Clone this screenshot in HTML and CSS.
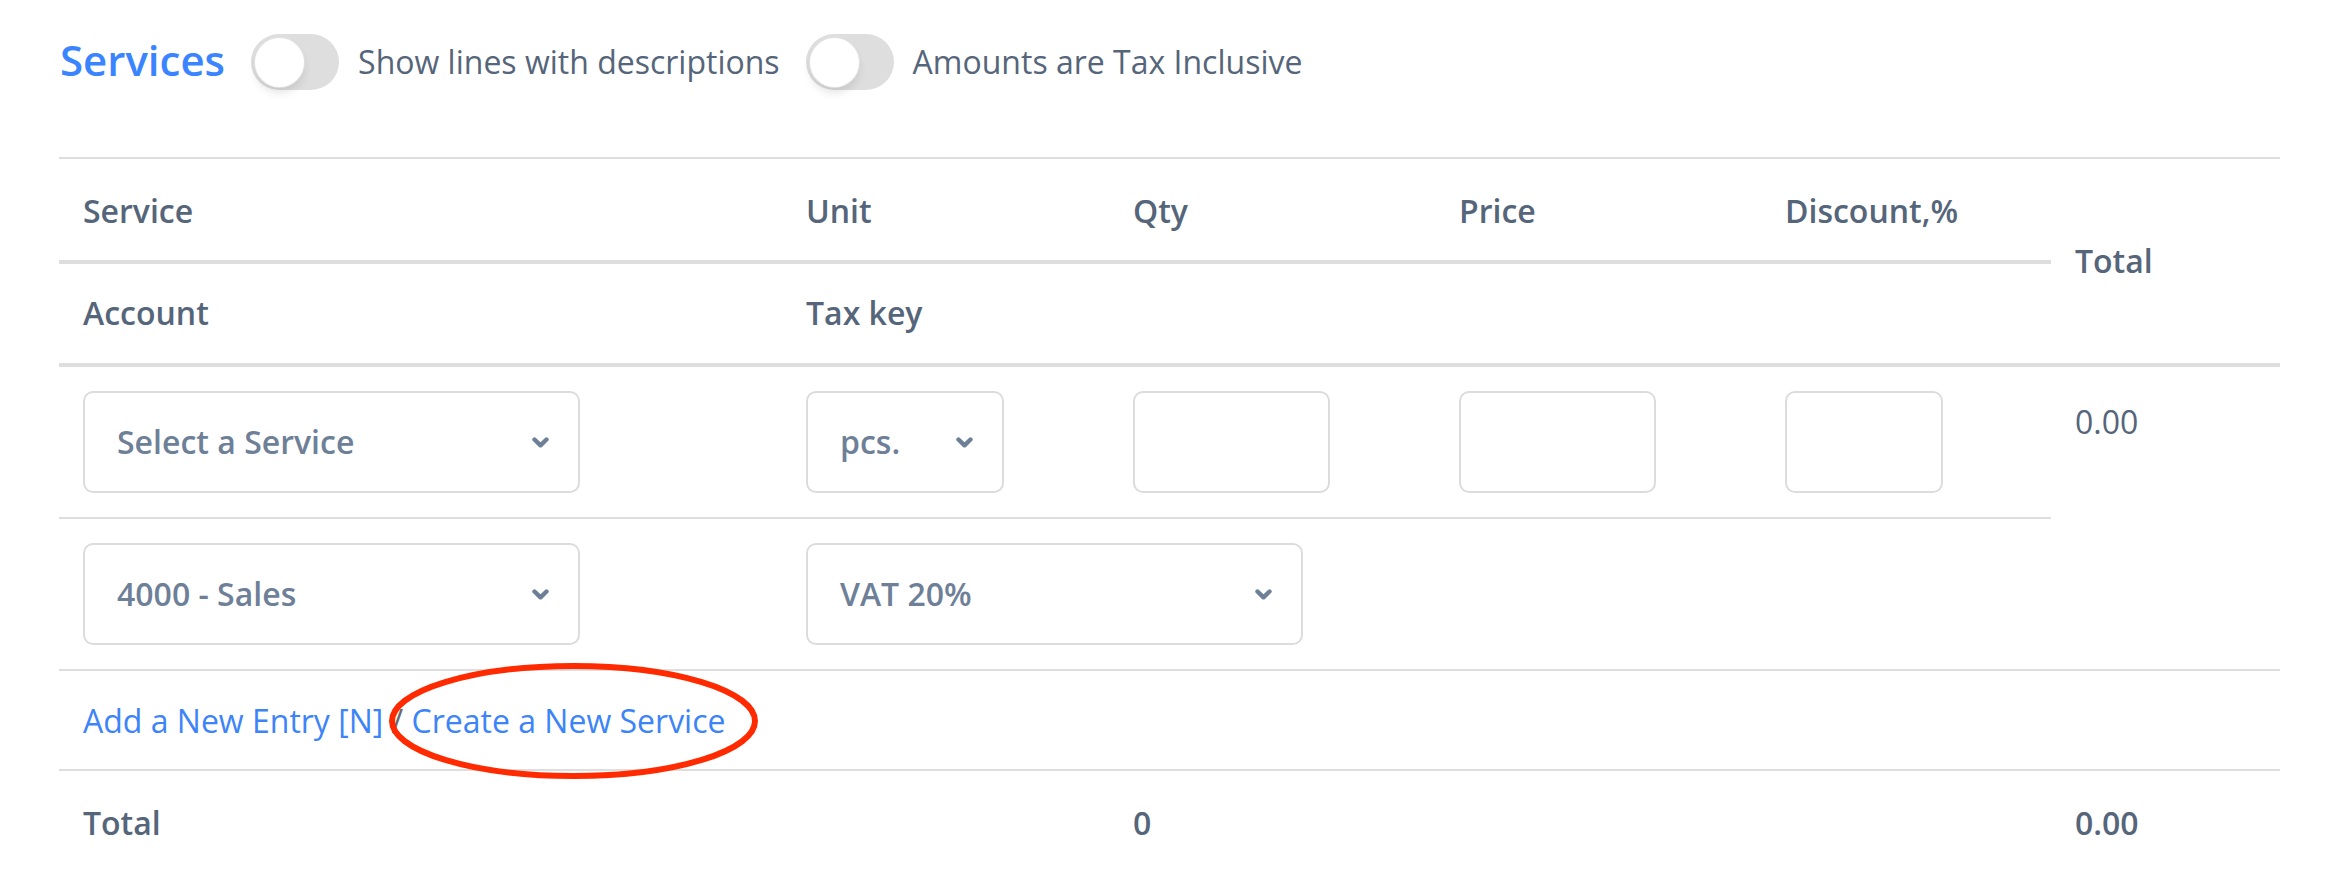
FILE: index.html
```html
<!DOCTYPE html>
<html lang="en">
<head>
<meta charset="utf-8">
<title>Services</title>
<link rel="stylesheet" href="styles.css">
</head>
<body>
<div class="page">
  <div class="heading">
    <h2 class="title">Services</h2>
    <label class="switch">
      <span class="track"><span class="knob"></span></span>
      <span class="switch-label">Show lines with descriptions</span>
    </label>
    <label class="switch">
      <span class="track"><span class="knob"></span></span>
      <span class="switch-label">Amounts are Tax Inclusive</span>
    </label>
  </div>

  <table class="lines">
    <colgroup>
      <col class="c-service">
      <col class="c-unit">
      <col class="c-qty">
      <col class="c-price">
      <col class="c-disc">
      <col class="c-total">
    </colgroup>
    <thead>
      <tr class="head-1">
        <th>Service</th>
        <th>Unit</th>
        <th>Qty</th>
        <th>Price</th>
        <th>Discount,%</th>
        <th rowspan="2" class="th-total">Total</th>
      </tr>
      <tr class="head-2">
        <th>Account</th>
        <th colspan="4">Tax key</th>
      </tr>
    </thead>
    <tbody>
      <tr class="entry">
        <td>
          <div class="select w-wide"><span>Select a Service</span><svg class="chev" viewBox="0 0 17 11"><path d="M2.5 2.5 L8.5 8.3 L14.5 2.5"/></svg></div>
        </td>
        <td>
          <div class="select w-unit"><span>pcs.</span><svg class="chev" viewBox="0 0 17 11"><path d="M2.5 2.5 L8.5 8.3 L14.5 2.5"/></svg></div>
        </td>
        <td><div class="input w-num"></div></td>
        <td><div class="input w-num"></div></td>
        <td><div class="input w-disc"></div></td>
        <td rowspan="2" class="amount">0.00</td>
      </tr>
      <tr class="entry">
        <td>
          <div class="select w-wide"><span>4000 - Sales</span><svg class="chev" viewBox="0 0 17 11"><path d="M2.5 2.5 L8.5 8.3 L14.5 2.5"/></svg></div>
        </td>
        <td colspan="4">
          <div class="select w-wide"><span>VAT 20%</span><svg class="chev" viewBox="0 0 17 11"><path d="M2.5 2.5 L8.5 8.3 L14.5 2.5"/></svg></div>
        </td>
      </tr>
      <tr>
        <td colspan="6" class="links"><a href="#">Add a New Entry [N]</a><span class="sep"> / </span><a href="#">Create a New Service</a></td>
      </tr>
    </tbody>
    <tfoot>
      <tr class="sum">
        <td>Total</td>
        <td></td>
        <td>0</td>
        <td></td>
        <td></td>
        <td>0.00</td>
      </tr>
    </tfoot>
  </table>

  <svg class="annotation" viewBox="0 0 381 126" width="381" height="126">
    <ellipse cx="190.5" cy="63" rx="181.5" ry="55"/>
  </svg>
</div>
</body>
</html>
```

FILE: styles.css
```css
html, body {
  margin: 0;
  padding: 0;
  background: #ffffff;
}

body {
  font-family: "Open Sans", "Noto Sans", sans-serif;
  color: #55657a;
}

.page {
  position: relative;
  padding: 34px 52px 0 59px;
  height: 840px;
  overflow: hidden;
}

/* ---------- heading ---------- */
.heading {
  display: flex;
  align-items: center;
  height: 56px;
  margin-bottom: 67px;
}

.title {
  margin: 0 26px 4px 1px;
  font-size: 42px;
  line-height: 56px;
  font-weight: 600;
  color: #3a85ff;
}

.switch {
  display: flex;
  align-items: center;
  gap: 19px;
  margin-right: 26px;
  font-size: 32px;
  line-height: 48px;
  color: #55657a;
}

.track {
  display: flex;
  align-items: center;
  box-sizing: border-box;
  width: 88px;
  height: 56px;
  padding: 0 4px;
  border-radius: 28px;
  background: #dedede;
}

.knob {
  width: 49px;
  height: 49px;
  border-radius: 50%;
  background: #ffffff;
  box-shadow: 0 0 0 1px #e2e2e2, 0 6px 9px rgba(0, 0, 0, 0.10);
}

/* ---------- table ---------- */
.lines {
  width: 2221px;
  border-collapse: collapse;
  table-layout: fixed;
}

.c-service { width: 723px; }
.c-unit { width: 327px; }
.c-qty { width: 326px; }
.c-price { width: 326px; }
.c-disc { width: 290px; }
.c-total { width: 229px; }

.lines th,
.lines td {
  padding: 0 24px;
  text-align: left;
  font-size: 32px;
  line-height: 48px;
  color: #55657a;
}

.lines thead th {
  font-weight: 600;
  vertical-align: top;
  border-bottom: 4px solid #dedede;
}

.head-1 th {
  border-top: 2px solid #dedede;
  padding-top: 28px;
  padding-bottom: 25px;
}

.head-2 th {
  padding-top: 25px;
  padding-bottom: 26px;
}

.lines thead th.th-total {
  vertical-align: middle;
  padding-top: 0;
  padding-bottom: 0;
}

.lines tbody td {
  border-top: 2px solid #dedede;
  vertical-align: top;
}

.entry td {
  padding-top: 24px;
  padding-bottom: 24px;
}

.entry td.amount {
  padding-top: 31px;
  font-weight: 400;
}

.select,
.input {
  box-sizing: border-box;
  height: 102px;
  border: 2px solid #dcdcdc;
  border-radius: 10px;
  background: #ffffff;
}

.select {
  display: flex;
  align-items: center;
  justify-content: space-between;
  padding: 0 29px 0 32px;
  font-size: 32px;
  font-weight: 600;
  color: #6e8098;
}

.chev {
  width: 17px;
  height: 11px;
  flex: none;
}

.chev path {
  fill: none;
  stroke: #6e8098;
  stroke-width: 4.4;
  stroke-linecap: round;
  stroke-linejoin: round;
}

.w-wide { width: 497px; }
.w-unit { width: 198px; }
.w-num { width: 197px; }
.w-disc { width: 158px; }

.lines td.links {
  padding-top: 26px;
  padding-bottom: 24px;
  white-space: nowrap;
}

.links a {
  color: #3d84f8;
  text-decoration: none;
}

.links .sep {
  color: #666a70;
}

.sum td {
  border-top: 2px solid #dedede;
  padding-top: 28px;
  padding-bottom: 20px;
  font-weight: 600;
}

/* ---------- annotation overlay ---------- */
.annotation {
  position: absolute;
  left: 383px;
  top: 658px;
  overflow: visible;
}

.annotation ellipse {
  fill: none;
  stroke: #ff2a00;
  stroke-width: 6;
}
```
